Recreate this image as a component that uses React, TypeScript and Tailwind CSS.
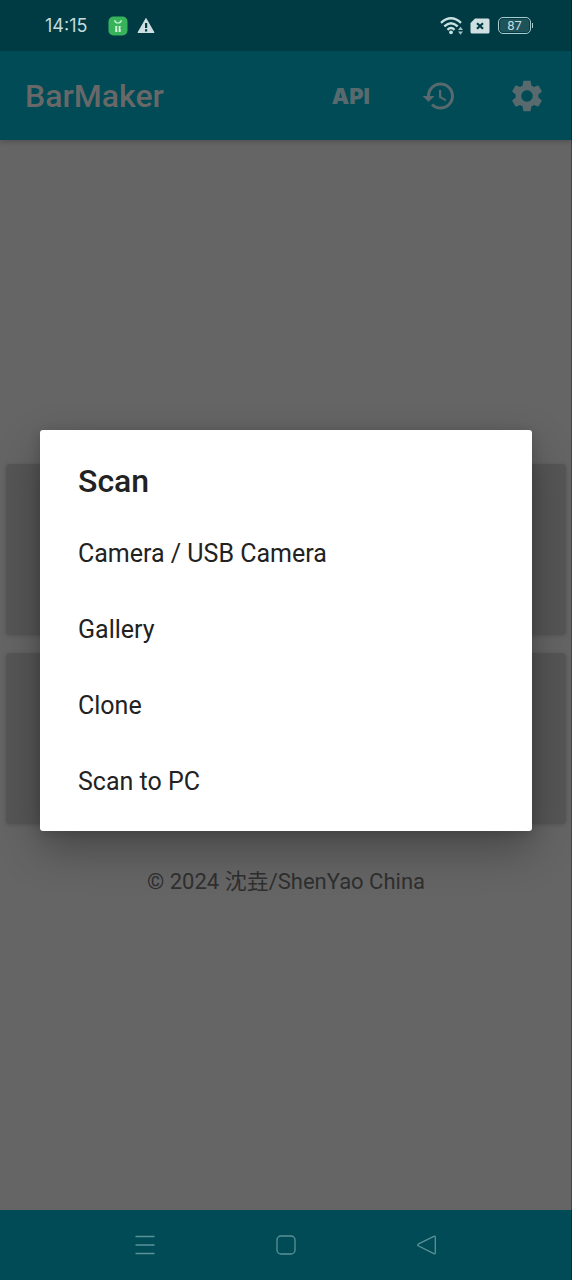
import React from "react";
import { MdHistory, MdSettings } from "react-icons/md";

const options = ["Camera / USB Camera", "Gallery", "Clone", "Scan to PC"];

function StatusBar() {
  return (
    <div className="flex h-[51px] items-center justify-between bg-[#003b44] pr-[39px] pl-[45px] text-[#c3dcdf]">
      <div className="flex items-center">
        <span className="font-[Inter,sans-serif] text-[18px] leading-6">14:15</span>
        <svg className="ml-[21px] size-5" viewBox="0 0 20 20" aria-hidden="true">
          <rect x="0.5" y="0.5" width="19" height="19" rx="5" fill="#37b35b" />
          <path d="M6.500 4.200 Q7.500 7 10 7 Q12.500 7 13.500 4.200" fill="none" stroke="#c8efd2" strokeWidth="1.200" />
          <path d="M7.300 10h2v1.500h-.5v1.200h.5v3.300h-2zM10.700 10h2v1.500h-.5v1.200h.5v3.300h-2z" fill="#d9f5e0" />
        </svg>
        <svg className="ml-2 size-5" viewBox="0 0 20 20" aria-hidden="true">
          <path d="M10 2.500 L18 16.500 H2 Z" fill="#cfdfe1" stroke="#cfdfe1" strokeWidth="1" strokeLinejoin="round" />
          <path d="M9 7h2.200v5H9zM9 13.200h2.200v2.200H9z" fill="#003b44" />
        </svg>
      </div>
      <div className="flex items-center">
        <svg className="h-5 w-6" viewBox="0 0 24 20" aria-hidden="true">
          <g fill="none" stroke="#c8e0e2" strokeWidth="2.400">
            <path d="M1 6.800 Q11 -2.200 21 6.800" />
            <path d="M4.300 10.400 Q11 4 17.700 10.400" />
            <path d="M7.500 13.800 Q11 10.300 14.500 13.800" />
          </g>
          <circle cx="11" cy="16.300" r="1.900" fill="#c8e0e2" />
          <path d="M18 14l2.500-3.200 2.500 3.200zM18 15.600l2.500 3.200 2.500-3.200z" fill="#a3c1c4" />
        </svg>
        <svg className="ml-[6px] h-4 w-5" viewBox="0 0 20 16" aria-hidden="true">
          <path d="M5 0.500H18a1.500 1.500 0 0 1 1.500 1.500v12a1.500 1.500 0 0 1-1.500 1.500H2a1.500 1.500 0 0 1-1.500-1.500V5z" fill="#d0dfe1" />
          <path d="M7 5.200l6 5.600M13 5.200l-6 5.600" stroke="#003b44" strokeWidth="2.200" />
        </svg>
        <div className="ml-2 flex h-[17px] w-[33px] items-center justify-center rounded-[5px] border border-[#a9cccf] p-px">
          <span className="flex h-full w-full items-center justify-center rounded-[3px] bg-[#1f535a] text-[13px] leading-none">87</span>
        </div>
        <span className="ml-px h-[5px] w-px bg-[#a9cccf]" />
      </div>
    </div>
  );
}

function AppBar() {
  return (
    <header className="flex h-[89px] items-center justify-between bg-[#004b56] pr-[26px] pl-[25px] text-[#586a6e] shadow-[0_2px_5px_rgba(0,0,0,0.2)]">
      <h1 className="text-[32px] leading-10 font-medium text-[#686868]">BarMaker</h1>
      <div className="flex items-center">
        <button type="button" className="font-[Inter,sans-serif] text-[22px] leading-8 font-black">
          API
        </button>
        <button type="button" aria-label="History" className="ml-[51px]">
          <MdHistory className="size-9" />
        </button>
        <button type="button" aria-label="Settings" className="ml-[51px]">
          <MdSettings className="size-[38px]" />
        </button>
      </div>
    </header>
  );
}

function NavBar() {
  return (
    <nav className="flex h-[70px] items-center justify-center gap-[119px] bg-[#004b56] text-[#5b9299]">
      <button type="button" aria-label="Recent apps">
        <svg className="size-[22px]" viewBox="0 0 22 22" fill="none" stroke="currentColor" strokeWidth="1.500">
          <path d="M1.500 2.500h19M1.500 11h19M1.500 19.500h19" />
        </svg>
      </button>
      <button type="button" aria-label="Home">
        <svg className="size-[22px]" viewBox="0 0 22 22" fill="none" stroke="currentColor" strokeWidth="1.300">
          <rect x="2" y="2" width="18" height="18" rx="4" />
        </svg>
      </button>
      <button type="button" aria-label="Back">
        <svg className="size-[22px]" viewBox="0 0 22 22" fill="none" stroke="currentColor" strokeWidth="1.300">
          <path d="M2.200 10.200 L17.800 2.300 Q19.300 1.800 19.300 3.300 V18.700 Q19.300 20.200 17.800 19.700 L2.200 11.800 Q1 11 2.200 10.200 Z" />
        </svg>
      </button>
    </nav>
  );
}

export default function App() {
  return (
    <div className="relative flex min-h-screen flex-col bg-[#656565] font-[Roboto,'Noto_Sans_CJK_SC',sans-serif]">
      <StatusBar />
      <AppBar />
      <main className="flex flex-1 flex-col justify-center px-[6px] pt-3">
        <div className="flex flex-col gap-[18px]">
          <div className="h-[171px] rounded-sm bg-[#565656] shadow-[0_1px_4px_rgba(0,0,0,0.15)]" />
          <div className="h-[171px] rounded-sm bg-[#565656] shadow-[0_1px_4px_rgba(0,0,0,0.15)]" />
        </div>
        <p className="mt-[42px] text-center text-[22px] leading-8 text-[#2f2f2f]">© 2024 沈垚/ShenYao China</p>
      </main>
      <NavBar />
      <div className="absolute inset-y-0 right-0 w-px bg-black/30" />
      <div className="absolute inset-x-0 top-[51px] bottom-[70px] flex items-center px-10">
        <section
          role="dialog"
          aria-labelledby="scan-title"
          className="w-full rounded-[3px] bg-white pb-[11px] text-[#222222] shadow-[0_18px_44px_rgba(0,0,0,0.3),0_2px_12px_rgba(0,0,0,0.15)]"
        >
          <h2 id="scan-title" className="px-[38px] pt-[31px] pb-[15px] text-[32px] leading-10 font-medium">
            Scan
          </h2>
          <ul>
            {options.map((option) => (
              <li key={option}>
                <button type="button" className="h-[76px] w-full px-[38px] text-left text-[25px] leading-8">
                  {option}
                </button>
              </li>
            ))}
          </ul>
        </section>
      </div>
    </div>
  );
}
